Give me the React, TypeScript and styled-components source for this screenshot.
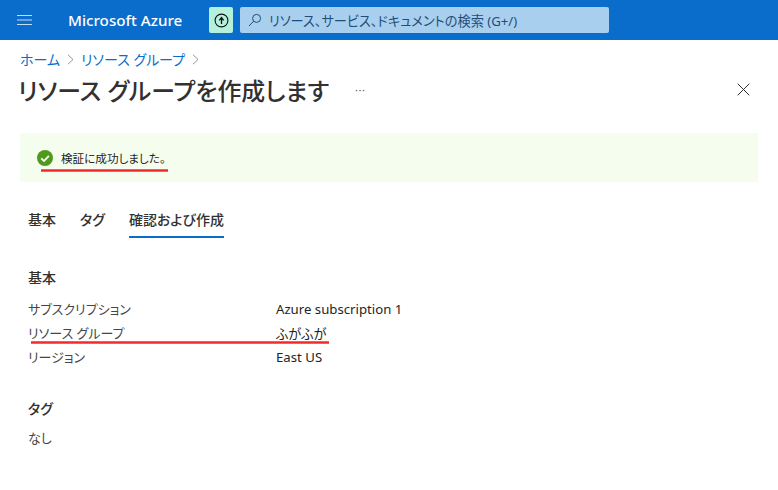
import styled, { createGlobalStyle } from "styled-components";

const jp = `"Noto Sans CJK JP", "Noto Sans", sans-serif`;
const GlobalStyle = createGlobalStyle`
  html, body { margin: 0; padding: 0; background: #fff; }
  body {
    font-family: "Noto Sans", ${jp};
    font-feature-settings: "palt";
    color: #323130;
    overflow: hidden;
  }
`;

const Page = styled.div`
  width: 778px;
  height: 490px;
  display: flex;
  flex-direction: column;
  overflow: hidden;
`;

const TopBar = styled.header`
  height: 40px;
  flex: none;
  background: #0a6ccb;
  display: flex;
  align-items: center;
  padding-left: 17px;
`;

const Brand = styled.div`
  margin-left: 36px;
  width: 141px;
  color: #fff;
  font-size: 15.2px;
  font-weight: 500;
  white-space: nowrap;
`;

const UploadButton = styled.div`
  width: 24px;
  height: 26px;
  border-radius: 2px;
  background: #b4f1dc;
  display: flex;
  align-items: center;
  justify-content: center;
`;

const Search = styled.div`
  margin-left: 7px;
  width: 369px;
  height: 26px;
  border-radius: 2px;
  background: #a9cfee;
  display: flex;
  align-items: center;
  gap: 7px;
  padding-left: 8px;
  box-sizing: border-box;
  color: #1f4e7a;
  font-size: 13.2px;
  white-space: nowrap;
`;

const Crumbs = styled.nav`
  margin: 9px 0 0 20px;
  height: 20px;
  display: flex;
  align-items: center;
  gap: 7px;
  font-size: 14px;
  color: #0a6ccb;
`;

const TitleRow = styled.div`
  height: 36px;
  margin-top: 2px;
  padding: 1px 28px 0 18px;
  box-sizing: border-box;
  display: flex;
  align-items: center;
`;

const Title = styled.h1`
  margin: 0;
  font-size: 23.9px;
  font-weight: 500;
  color: #323130;
  white-space: nowrap;
`;

const More = styled.span`
  margin-left: 26px;
  font-size: 11px;
  color: #605e5c;
  letter-spacing: 0.5px;
`;

const Close = styled.div`
  margin-left: auto;
  display: flex;
`;

const Banner = styled.div`
  position: relative;
  margin: 26px 20px 0;
  height: 49px;
  background: #f4fdee;
  display: flex;
  align-items: center;
  gap: 8px;
  padding-left: 17px;
  box-sizing: border-box;
  font-size: 11.6px;
  color: #252423;
`;

const RedLine = styled.svg<{ $left: number; $top: number }>`
  position: absolute;
  left: ${(p) => p.$left}px;
  top: ${(p) => p.$top}px;
  filter: blur(0.6px);
`;

const Tabs = styled.div`
  margin: 24px 0 0 28px;
  height: 32px;
  display: flex;
  gap: 24px;
`;

const Tab = styled.div<{ $active?: boolean }>`
  box-sizing: border-box;
  height: 32px;
  padding-top: 3px;
  font-size: 14px;
  font-weight: 500;
  color: #323130;
  border-bottom: 2px solid ${(p) => (p.$active ? "#0a6ccb" : "transparent")};
`;

const Section = styled.section`
  margin: 29px 0 0 28px;
`;

const SectionTitle = styled.h2`
  margin: 0 0 8px;
  height: 22px;
  line-height: 22px;
  font-size: 14px;
  font-weight: 500;
  color: #323130;
`;

const Rows = styled.dl`
  position: relative;
  margin: 0;
  display: grid;
  grid-template-columns: 248px 1fr;
  grid-auto-rows: 24px;
  align-items: center;
  font-size: 13px;
`;

const Label = styled.dt`
  padding-bottom: 2px;
  color: #484644;
`;

const Value = styled.dd`
  margin: 0;
  color: #252423;
  font-size: 13.2px;
`;

const Plain = styled.div`
  margin-top: 4px;
  font-size: 13px;
  color: #484644;
`;

const Chevron = () => (
  <svg width="7" height="11" viewBox="0 0 7 11" fill="none" stroke="#8a8886" strokeWidth="0.9">
    <path d="M1 .8 6 5.5 1 10.2" />
  </svg>
);

const Squiggle = ({ left, top, width }: { left: number; top: number; width: number }) => (
  <RedLine $left={left} $top={top} width={width} height="5" viewBox={`0 0 ${width} 5`}>
    <line x1="1" y1="2.5" x2={width - 1} y2="2.5" stroke="#f4282a" strokeWidth="2.6" />
  </RedLine>
);

export default function App() {
  return (
    <Page>
      <GlobalStyle />
      <TopBar>
        <svg width="15" height="12" viewBox="0 0 15 12" stroke="#c5dcf3" strokeWidth="1.2">
          <path d="M0 1.5h15M0 6h15M0 10.5h15" />
        </svg>
        <Brand>Microsoft Azure</Brand>
        <UploadButton>
          <svg width="15" height="15" viewBox="0 0 15 15" fill="none">
            <circle cx="7.5" cy="7.5" r="6.4" stroke="#111" strokeWidth="1.1" />
            <path d="M7.5 11V5M5.3 7.3 7.5 4.6l2.2 2.7" stroke="#111" strokeWidth="1.3" />
          </svg>
        </UploadButton>
        <Search>
          <svg width="14" height="14" viewBox="0 0 14 14" fill="none" stroke="#1f4e7a" strokeWidth="1">
            <circle cx="8.6" cy="5.4" r="4" />
            <path d="M5.6 8.2 1 13" />
          </svg>
          リソース、サービス、ドキュメントの検索 (G+/)
        </Search>
      </TopBar>

      <Crumbs>
        <span>ホーム</span>
        <Chevron />
        <span>リソース グループ</span>
        <Chevron />
      </Crumbs>

      <TitleRow>
        <Title>リソース グループを作成します</Title>
        <More>···</More>
        <Close>
          <svg width="13" height="13" viewBox="0 0 13 13" stroke="#323130" strokeWidth="1">
            <path d="M.7.7l11.6 11.6M12.3.7.7 12.3" />
          </svg>
        </Close>
      </TitleRow>

      <Banner>
        <svg width="16" height="16" viewBox="0 0 16 16" fill="none">
          <circle cx="8" cy="8" r="8" fill="#4f9a1c" />
          <path d="M4.2 8.3 7 11l4.9-5.2" stroke="#fff" strokeWidth="1.8" />
        </svg>
        <span>検証に成功しました。</span>
        <Squiggle left={20} top={35} width={129} />
      </Banner>

      <Tabs>
        <Tab>基本</Tab>
        <Tab>タグ</Tab>
        <Tab $active>確認および作成</Tab>
      </Tabs>

      <Section>
        <SectionTitle>基本</SectionTitle>
        <Rows>
          <Label>サブスクリプション</Label>
          <Value>Azure subscription 1</Value>
          <Label>リソース グループ</Label>
          <Value>ふがふが</Value>
          <Label>リージョン</Label>
          <Value>East US</Value>
          <Squiggle left={2} top={43} width={300} />
        </Rows>
      </Section>

      <Section>
        <SectionTitle>タグ</SectionTitle>
        <Plain>なし</Plain>
      </Section>
    </Page>
  );
}
